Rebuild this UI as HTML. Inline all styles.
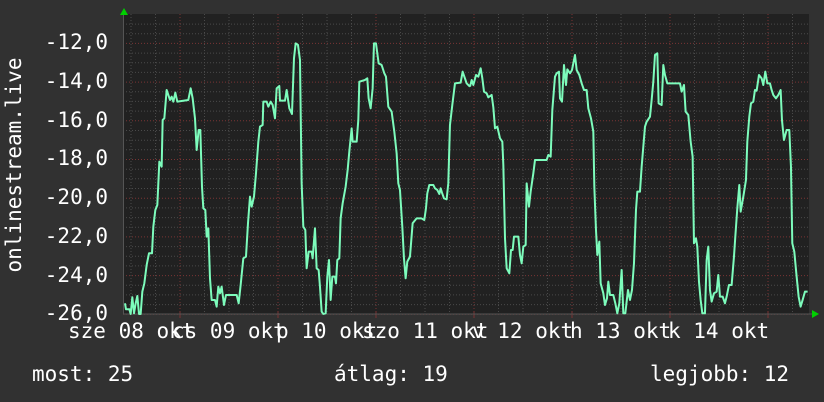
<!DOCTYPE html>
<html><head><meta charset="utf-8"><style>
html,body{margin:0;padding:0;background:#313131;}
body{width:824px;height:402px;position:relative;overflow:hidden;font-family:"DejaVu Sans Mono","Liberation Mono",monospace;color:#fff;}
.t{position:absolute;font-size:21px;white-space:pre;line-height:1;}
.yl{right:716px;text-align:right;}
</style></head><body>
<svg id="s" width="824" height="402" style="position:absolute;left:0;top:0">
<rect x="123" y="14" width="686" height="300" fill="#212121"/>
<g id="grid"></g>
<line x1="123" y1="314" x2="812" y2="314" stroke="#555" stroke-width="1"/>
<line x1="123.5" y1="12" x2="123.5" y2="314" stroke="#555" stroke-width="1"/>
<polygon points="120,15 124,8 128,15" fill="#00d000"/>
<polygon points="812,310 819,314 812,318" fill="#00d000"/>
<g fill="none" stroke="#7dfcbc" stroke-width="2" stroke-linejoin="round">
<polyline transform="translate(120,10) scale(0.3333)" vector-effect="non-scaling-stroke" points="15,880 18,898 28,898 32,912 37,862 42,910 47,880 52,858 57,912 62,912 67,845 73,820 80,765 87,730 96,730 100,650 106,600 112,585 118,455 125,470 128,330 133,325 140,240 150,270 155,260 160,275 166,248 172,275 205,270 212,235 218,265 225,325 230,420 236,360 241,360 246,530 250,595 256,600 260,680 265,655 270,805 275,870 285,870 290,890 295,830 300,850 305,830 312,885 318,855 324,855 350,855 356,880 362,825 370,745 378,740 384,640 390,560 395,590 402,560 408,490 415,395 420,350 428,345 430,275 440,275 445,290 452,275 458,285 465,325 470,235 478,228 480,272 495,272 500,240 508,295 516,312 522,145 527,100 534,105 540,150 545,520 550,650 556,660 560,775 566,725 575,725 578,745 585,655 590,775 596,780 600,830 605,905 610,912 617,910 622,800 627,750 632,870 637,800 645,800 648,820 652,750 658,745 662,625 668,580 677,530 683,480 688,425 695,355 698,395 710,395 715,330 718,215 735,210 742,205 746,265 752,295 758,235 762,100 768,100 776,160 785,165 793,190 798,200 805,290 815,305 823,365 830,430 835,520 840,540 847,650 852,745 857,805 862,755 870,740 878,640 890,625 904,625 913,630 918,595 922,550 928,525 940,525 945,535 952,540 958,552 962,535 966,548 972,565 980,568 985,520 990,345 997,285 1005,220 1022,218 1028,185 1040,220 1050,230"/>
<polyline transform="translate(460,10) scale(0.3333)" vector-effect="non-scaling-stroke" points="30,230 35,210 40,225 48,195 55,200 62,175 67,205 72,245 80,250 85,262 95,255 100,292 105,355 112,350 120,385 127,395 130,465 135,685 140,775 148,790 153,720 158,720 162,680 175,680 180,735 185,760 190,710 197,705 200,520 207,590 212,545 220,490 225,450 260,450 265,435 272,440 277,300 285,200 290,190 297,185 300,265 306,275 312,165 318,225 322,178 330,190 336,180 345,135 350,180 358,195 365,220 372,240 380,240 385,295 393,325 400,365 403,530 408,660 412,735 418,695 422,820 430,850 435,885 441,865 445,815 450,855 460,855 466,880 472,910 478,880 485,780 490,910 496,910 504,840 510,870 516,840 522,760 528,600 532,545 540,545 545,470 550,410 555,350 560,335 570,320 575,270 580,215 585,135 592,130 596,280 605,285 610,165 615,195 622,220 628,220 660,220 665,245 672,225 677,305 685,315 692,395 698,440 702,700 708,685 712,710 717,815 722,870 727,910 735,910 740,750 745,710 750,840 755,875 762,850 770,845 775,795 780,860 788,860 795,880 800,860 807,825 815,825 822,740 826,680 832,595 838,525 842,605 850,560 858,510 862,395 868,320 873,280 880,275 885,240 890,242 897,195 905,205 910,225 916,185 922,220 930,220 935,240 940,255 948,265 955,255 962,240 966,330 972,390 980,360 988,360 993,470 997,700 1003,725 1010,800 1016,860 1022,890 1028,870 1035,845 1043,845"/>
</g>
<text transform="translate(21,165) rotate(-90)" text-anchor="middle" fill="#fff" font-family="DejaVu Sans Mono, Liberation Mono, monospace" font-size="21">onlinestream.live</text>
</svg>
<script>
var g=document.getElementById('grid'),h='';
for(var k=0;k<=30;k++){var y=(314.3-9.675*k).toFixed(1);var m=k%4==0;h+='<line x1="123" x2="809" y1="'+y+'" y2="'+y+'" stroke="'+(m?'#7a3434':'#4a4a4a')+'" stroke-dasharray="1,2"/>';}
for(var k=-2;k<=25;k++){var x=(180+24.5*k).toFixed(1);var m=((k%4)+4)%4==0;h+='<line y1="14" y2="314" x1="'+x+'" x2="'+x+'" stroke="'+(m?'#7a3434':'#4a4a4a')+'" stroke-dasharray="1,2"/>';if(m)h+='<line y1="312" y2="318" x1="'+x+'" x2="'+x+'" stroke="#7a3434"/>';}
g.innerHTML=h;
</script>
<div class="t yl" style="top:32px">-12,0</div>
<div class="t yl" style="top:71px">-14,0</div>
<div class="t yl" style="top:110px">-16,0</div>
<div class="t yl" style="top:148px">-18,0</div>
<div class="t yl" style="top:187px">-20,0</div>
<div class="t yl" style="top:226px">-22,0</div>
<div class="t yl" style="top:265px">-24,0</div>
<div class="t yl" style="top:303px">-26,0</div>
<div class="t" style="top:321px;left:68px">sze 08 okt</div>
<div class="t" style="top:321px;left:172px">cs 09 okt</div>
<div class="t" style="top:321px;left:276px">p 10 okt</div>
<div class="t" style="top:321px;left:362px">szo 11 okt</div>
<div class="t" style="top:321px;left:472px">v 12 okt</div>
<div class="t" style="top:321px;left:570px">h 13 okt</div>
<div class="t" style="top:321px;left:668px">k 14 okt</div>
<div class="t" style="top:364px;left:32px">most: 25</div>
<div class="t" style="top:364px;left:334px">átlag: 19</div>
<div class="t" style="top:364px;left:650px">legjobb: 12</div>
</body></html>
